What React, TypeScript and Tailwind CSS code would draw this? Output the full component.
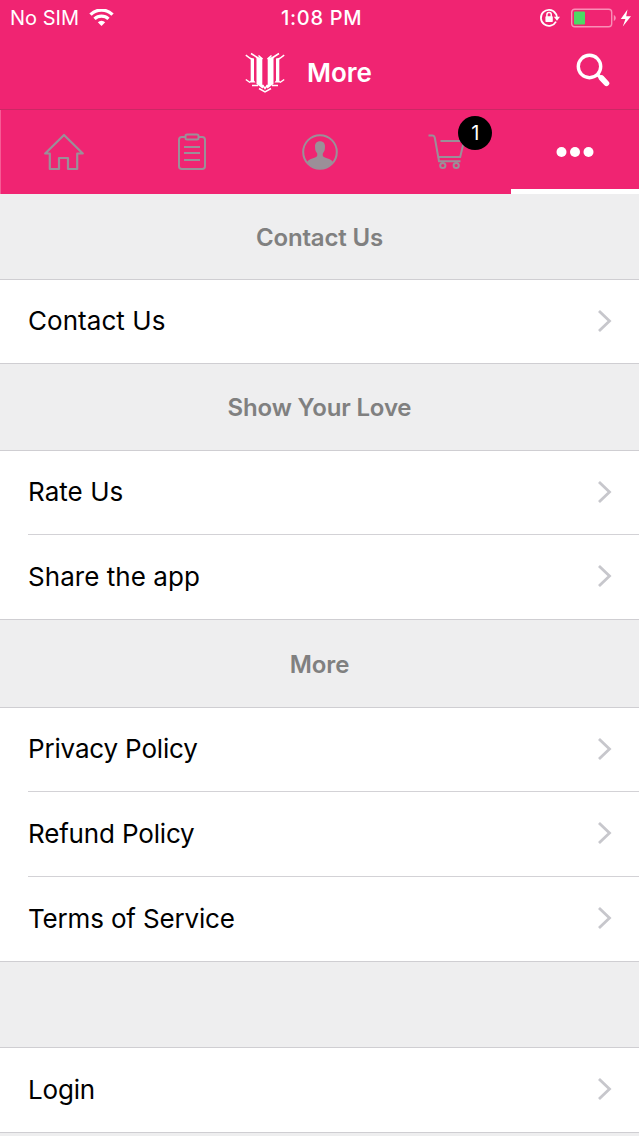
import React from 'react';
import clsx from 'clsx';

const StatusBar = () => (
  <div className="flex h-9 shrink-0 items-center text-xl text-white">
    <div className="flex w-[281px] items-center pl-2.5">
      <span className="w-[79px] text-[20px] whitespace-nowrap">No SIM</span>
      <svg width="25" height="18" viewBox="0 0 25 18" fill="none">
        <path d="M1.500 5.600a15.800 15.800 0 0 1 22 0" stroke="#fff" strokeWidth="3.400" />
        <path d="M5.500 9.900a10 10 0 0 1 14 0" stroke="#fff" strokeWidth="3.200" />
        <path d="M8.800 13.200a5.300 5.300 0 0 1 7.400 0l-3.700 3.900z" fill="#fff" />
      </svg>
    </div>
    <span className="w-[258px] text-[20px] font-medium whitespace-nowrap tracking-[0.7px]">
      1:08 PM
    </span>
    <div className="flex items-center">
      <svg width="22" height="20" viewBox="0 0 22 20" fill="none">
        <path
          d="M16.300 5A8 8 0 1 0 17 13.600M15 3.800A8 8 0 0 1 18 9.500"
          stroke="#fff"
          strokeWidth="1.800"
        />
        <path d="M14.800 8.800h6.200L18 12.800z" fill="#fff" />
        <rect x="6.400" y="8.200" width="7.400" height="5.800" rx="0.800" fill="#fff" />
        <path d="M7.900 9V6.800a2.200 2.200 0 0 1 4.400 0V9" stroke="#fff" strokeWidth="1.500" />
      </svg>
      <svg
        className="ml-2.5"
        width="61"
        height="20"
        viewBox="0 0 61 20"
        fill="none"
      >
        <rect x="0.7" y="1.2" width="40" height="17.6" rx="3" stroke="#f98fb7" strokeWidth="1.4" />
        <rect x="3" y="3.5" width="11" height="13" rx="0.8" fill="#4cd964" />
        <path d="M42.8 7c2.6.8 2.6 5.2 0 6z" fill="#f98fb7" />
        <path d="M56.500 1.500 49.800 11h4.600l-2.600 7.500 8.200-10.300h-4.800z" fill="#fff" />
      </svg>
    </div>
  </div>
);

const Logo = () => (
  <svg width="40" height="42" viewBox="0 0 40 42" fill="none">
    <path d="M10.500 4.500 17.300 6v26.500l1.700 1.700-1.500 2.300-6-4.500V6.500z" fill="#fff" />
    <path d="M29.500 4.500 22.700 6v26.500L21 34.200l1.500 2.300 6-4.500V6.500z" fill="#fff" />
    <path d="M4.500 5.500 9 6.500v22l1.500 2H4.200l1.500-2V7.500zM35.500 5.500 31 6.500v22l-1.500 2h6.300l-1.500-2V7.500z" fill="#fff" />
    <path
      d="M.8 3.200 6 7M6 1.500 13 6M13.500 3.500l4 3.500M39.200 3.200 34 7M34 1.500 27 6M26.500 3.500l-4 3.500M.8 27.500 5 30.500M39.200 27.500 35 30.500M7 33.500h6M33 33.500h-6M14 36.500l6 3.500 6-3.500M17.500 33l2.500 3.500 2.500-3.500"
      stroke="#fff"
      strokeWidth="1.500"
    />
  </svg>
);

const Header = () => (
  <div className="flex h-[74px] shrink-0 items-center border-b border-[#cb2865] pl-[245px] text-white">
    <Logo />
    <span className="ml-[22px] w-[269px] text-[26px] font-semibold">More</span>
    <svg className="-mt-1.5" width="34" height="34" viewBox="0 0 34 34" fill="none">
      <circle cx="13.5" cy="13.5" r="11.2" stroke="#fff" strokeWidth="3.4" />
      <path d="m22 22 2.5 2.5" stroke="#fff" strokeWidth="3.4" />
      <path d="m25.500 25 5 5.300" stroke="#fff" strokeWidth="5.6" strokeLinecap="round" />
    </svg>
  </div>
);

const HomeIcon = () => (
  <svg width="40" height="38" viewBox="0 0 40 38" fill="none" stroke="#9b8f98" strokeWidth="2.2" strokeLinejoin="round">
    <path d="M20 2 1.2 20.5h4.6V36H15V25h9v11h9.2V20.5h5.6z" />
  </svg>
);

const OrdersIcon = () => (
  <svg width="28" height="38" viewBox="0 0 28 38" fill="none" stroke="#9b8f98" strokeWidth="2">
    <path d="M7.5 4H3.8A2.8 2.8 0 0 0 1 6.8v26.4A2.8 2.8 0 0 0 3.8 36h20.4a2.8 2.8 0 0 0 2.8-2.8V6.8A2.8 2.8 0 0 0 24.2 4h-3.7" />
    <rect x="7.5" y="1.500" width="13" height="5" rx="1.500" />
    <path d="M6 14h16M6 20h16M6 27h16" strokeWidth="1.800" />
  </svg>
);

const ProfileIcon = () => (
  <svg className="ml-px" width="36" height="36" viewBox="0 0 36 36" fill="none">
    <circle cx="18" cy="18" r="16.800" stroke="#9b8f98" strokeWidth="2" />
    <path
      d="M18 7.200c-3.200 0-5.200 2.200-5 5.400l.2 2.600c.1 1.500.9 2.800 1.800 3.800.4 1.400.4 2.800-.3 3.600-1.200 1.400-7.200 1.800-9.700 5.400A16 16 0 0 0 18 34.500 16 16 0 0 0 31 28c-2.500-3.600-8.500-4-9.700-5.400-.7-.8-.7-2.200-.3-3.600.9-1 1.700-2.300 1.800-3.800l.2-2.600c.2-3.200-1.800-5.400-5-5.400z"
      fill="#9b8f98"
    />
  </svg>
);

const CartIcon = () => (
  <svg width="38" height="38" viewBox="0 0 38 38" fill="none" stroke="#9b8f98" strokeWidth="2">
    <path d="M.500 2.500h3.900c1.400 0 2 .8 2.400 2.200L11 28.300h21.500" />
    <path d="M12.500 8h23.500l-3.800 16H10.500" />
    <circle cx="14.800" cy="32.500" r="2.600" />
    <circle cx="28.200" cy="32.500" r="2.600" />
  </svg>
);

const MoreIcon = () => (
  <svg width="38" height="10" viewBox="0 0 38 10" fill="#fff">
    <circle cx="5.500" cy="5" r="5" />
    <circle cx="19" cy="5" r="5" />
    <circle cx="32.500" cy="5" r="5" />
  </svg>
);

const Tabs = () => (
  <div className="grid h-[84px] shrink-0 grid-cols-5">
    <div className="flex items-center justify-center border-l border-[#f65b95]">
      <HomeIcon />
    </div>
    <div className="flex items-center justify-center">
      <OrdersIcon />
    </div>
    <div className="flex items-center justify-center">
      <ProfileIcon />
    </div>
    <div className="relative flex items-center justify-center">
      <CartIcon />
      <span className="absolute top-1.5 left-[75px] flex size-[34px] items-center justify-center rounded-full bg-black text-xl text-white">
        1
      </span>
    </div>
    <div className="flex items-center justify-center border-b-[5px] border-white pt-[5px]">
      <MoreIcon />
    </div>
  </div>
);

type SectionProps = {
  title?: string;
  className: string;
};

const SectionTitle = ({ title, className }: SectionProps) => (
  <h2
    className={clsx(
      'flex shrink-0 items-center justify-center border-b border-[#cfced2] bg-[#eeeeef] pt-0.5 text-2xl font-semibold tracking-[-0.15px] text-[#808080]',
      className
    )}
  >
    {title}
  </h2>
);

type RowProps = {
  label: string;
  className?: string;
  tight?: boolean;
  last?: boolean;
};

const Row = ({
  label,
  className = 'h-[85px]',
  tight = false,
  last = false,
}: RowProps) => (
  <div
    className={clsx(
      'shrink-0 bg-white',
      last && 'border-b border-[#cfced2]',
      className
    )}
  >
    <div
      className={clsx(
        'ml-7 flex h-full items-center justify-between pr-[27px] pb-0.5',
        !last && 'border-b border-[#d3d2d6]'
      )}
    >
      <span
        className={clsx(
          'text-[26px]',
          tight ? 'tracking-[-0.17px]' : 'tracking-[0.05px]'
        )}
      >
        {label}
      </span>
      <svg width="15" height="22" viewBox="0 0 15 22" fill="none">
        <path d="m2 1 10.500 10L2 21" stroke="#c7c7cc" strokeWidth="2.800" />
      </svg>
    </div>
  </div>
);

const App = () => {
  return (
    <div className="flex h-[1136px] w-full flex-col overflow-hidden bg-[#eeeeef] font-['Inter',sans-serif] text-black">
      <div className="flex shrink-0 flex-col bg-[#f02472]">
        <StatusBar />
        <Header />
        <Tabs />
      </div>
      <SectionTitle title="Contact Us" className="h-[86px]" />
      <Row label="Contact Us" className="h-[84px]" last />
      <SectionTitle title="Show Your Love" className="h-[87px]" />
      <Row label="Rate Us" className="h-[84px]" />
      <Row label="Share the app" last />
      <SectionTitle title="More" className="h-[88px]" />
      <Row label="Privacy Policy" className="h-[84px]" tight />
      <Row label="Refund Policy" tight />
      <Row label="Terms of Service" tight last />
      <SectionTitle className="h-[86px]" />
      <Row label="Login" className="h-[85px]" tight last />
    </div>
  );
};

export default App;
